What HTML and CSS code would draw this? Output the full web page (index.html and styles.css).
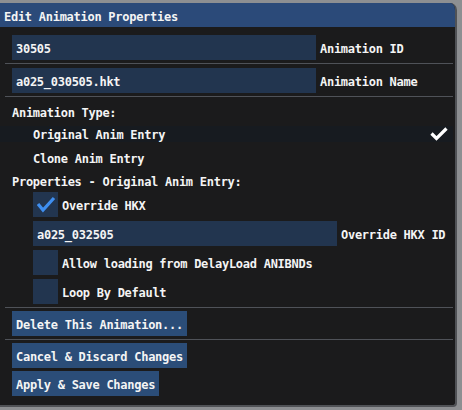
FILE: index.html
```html
<!DOCTYPE html>
<html>
<head>
<meta charset="utf-8">
<link rel="stylesheet" href="styles.css">
</head>
<body>
<div class="page">
  <div class="window">
    <div class="titlebar">Edit Animation Properties</div>
    <div class="content">
      <div class="field-row">
        <div class="input">30505</div>
        <span class="label">Animation ID</span>
      </div>
      <div class="sep"></div>
      <div class="field-row gap4">
        <div class="input">a025_030505.hkt</div>
        <span class="label">Animation Name</span>
      </div>
      <div class="sep gap4"></div>
      <div class="text-row first"><span class="t">Animation Type:</span></div>
      <div class="sel-row">
        <div class="selectable">
          <span class="sel-text">Original Anim Entry</span>
          <svg class="tick" width="18" height="14" viewBox="0 0 18 14"><path d="M1.5 6.5 L6.5 11.5 L16.5 1.5" fill="none" stroke="#ffffff" stroke-width="3.2"/></svg>
        </div>
      </div>
      <div class="text-row"><span class="t indent-text">Clone Anim Entry</span></div>
      <div class="text-row"><span class="t">Properties - Original Anim Entry:</span></div>
      <div class="indent">
        <div class="check-row">
          <div class="checkbox"><svg width="25" height="25" viewBox="0 0 25 25"><path d="M5 12 L10 18 L21 6" fill="none" stroke="#3f8ff0" stroke-width="3.2"/></svg></div>
          <span class="check-label">Override HKX</span>
        </div>
        <div class="field-row gap4">
          <div class="input">a025_032505</div>
          <span class="label">Override HKX ID</span>
        </div>
        <div class="check-row gap4">
          <div class="checkbox"></div>
          <span class="check-label">Allow loading from DelayLoad ANIBNDs</span>
        </div>
        <div class="check-row gap4">
          <div class="checkbox"></div>
          <span class="check-label">Loop By Default</span>
        </div>
      </div>
      <div class="sep gap4"></div>
      <div class="btn-row m3"><div class="button">Delete This Animation...</div></div>
      <div class="sep gap4"></div>
      <div class="btn-row m3"><div class="button">Cancel &amp; Discard Changes</div></div>
      <div class="btn-row m3"><div class="button">Apply &amp; Save Changes</div></div>
    </div>
  </div>
</div>
</body>
</html>
```

FILE: styles.css
```css
html, body {
  margin: 0;
  padding: 0;
}
* {
  box-sizing: border-box;
}
body {
  background: #8d8f92;
  font-family: "DejaVu Sans Mono", "Liberation Mono", monospace;
  font-weight: bold;
  font-size: 12px;
  letter-spacing: -0.27px;
  color: #f4f4f4;
  width: 462px;
  height: 410px;
  overflow: hidden;
}
.page {
  padding-top: 3px;
}
.window {
  width: 457px;
  height: 404px;
  background: #1b1b1c;
  border-right: 2px solid #505256;
  border-bottom: 2px solid #505256;
  border-top-right-radius: 7px;
  border-bottom-right-radius: 4px;
  overflow: hidden;
}
.titlebar {
  height: 24px;
  padding-top: 4px;
  line-height: 20px;
  padding-left: 4px;
  background: #2b4a79;
  white-space: pre;
}
.content {
  padding: 8px 0 0 12px;
}
.field-row {
  display: flex;
  align-items: flex-start;
  height: 25px;
}
.gap4 {
  margin-top: 4px;
}
.m3 {
  margin-top: 3px;
}
.input {
  width: 304px;
  height: 25px;
  padding-top: 4px;
  line-height: 21px;
  padding-left: 4px;
  background: #22354f;
  white-space: pre;
}
.label {
  margin-left: 4px;
  padding-top: 4px;
  line-height: 21px;
  white-space: pre;
}
.sep {
  height: 1px;
  background: #4f5258;
  margin-left: -7px;
  width: 448px;
  margin-top: 3px;
}
.text-row {
  height: 23px;
  padding-top: 4px;
  line-height: 19px;
}
.t {
  white-space: pre;
}
.text-row.first {
  margin-top: 3px;
}
.indent-text {
  padding-left: 21px;
}
.sel-row {
  margin-left: -12px;
  width: 453px;
  height: 23px;
  padding-top: 3px;
}
.selectable {
  height: 16px;
  background: #171b20;
  display: flex;
  align-items: center;
  justify-content: space-between;
  padding-left: 33px;
  padding-right: 5px;
}
.sel-text {
  white-space: pre;
  padding-top: 3px;
  line-height: 15px;
}
.tick {
  display: block;
}
.indent {
  padding-left: 21px;
}
.check-row {
  display: flex;
  align-items: flex-start;
  height: 25px;
}
.checkbox {
  width: 25px;
  height: 25px;
  background: #22354f;
}
.checkbox svg {
  display: block;
}
.check-label {
  margin-left: 4px;
  padding-top: 4px;
  line-height: 21px;
  white-space: pre;
}
.btn-row {
  display: flex;
}
.button {
  height: 25px;
  padding: 4px 4px 0 4px;
  line-height: 21px;
  background: #2b4d78;
  white-space: pre;
}
```
